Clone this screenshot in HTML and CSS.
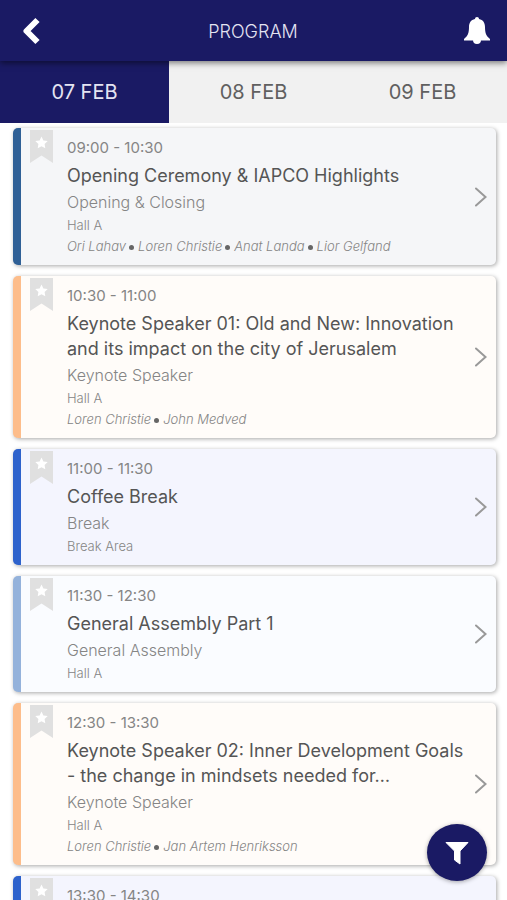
FILE: index.html
```
<!DOCTYPE html>
<html lang="en">
<head>
<meta charset="utf-8">
<meta name="viewport" content="width=device-width, initial-scale=1">
<title>Program</title>
<link rel="stylesheet" href="styles.css">
</head>
<body>
<svg class="defs" aria-hidden="true">
  <symbol id="bookmark" viewBox="0 0 23 33">
    <path fill="#e0e0e0" d="M0 0h23v33l-11.500-7.500L0 33z"/>
    <path fill="#fff" d="M11.500 6.500l1.900 3.900 4.300.6-3.100 3 .7 4.300-3.800-2-3.800 2 .7-4.300-3.100-3 4.300-.6z"/>
  </symbol>
  <symbol id="chevron" viewBox="0 0 12 20">
    <path fill="none" stroke="#999" stroke-width="2" stroke-linecap="round" d="M1 1.500l9.500 8.500L1 18.500"/>
  </symbol>
</svg>
<header class="topbar">
  <button class="icon-button" aria-label="Back"><svg class="back" viewBox="0 0 20 28"><path fill="none" stroke="#fff" stroke-width="6" stroke-linejoin="round" d="M16 3L5 14l11 11"/></svg></button>
  <h1>PROGRAM</h1>
  <button class="icon-button" aria-label="Notifications"><svg class="bell" viewBox="0 0 26 28"><path fill="#fff" d="M13 0c1.200 0 2 .8 2 2 4.200.9 6 4 6 8 0 6 1.200 9 5 12v1.500H0V22c3.800-3 5-6 5-12 0-4 1.800-7.100 6-8 0-1.200.8-2 2-2zM9 23h8a4 4 0 0 1-8 0z"/></svg></button>
</header>
<nav class="tabs">
  <button class="tab active">07 FEB</button>
  <button class="tab">08 FEB</button>
  <button class="tab">09 FEB</button>
</nav>
<main class="sessions">
  <article class="card navy">
    <button class="save" aria-label="Save session"><svg><use href="#bookmark"/></svg></button>
    <div class="body">
      <p class="time">09:00 - 10:30</p>
      <h2>Opening Ceremony &amp; IAPCO Highlights</h2>
      <p class="type">Opening &amp; Closing</p>
      <p class="hall">Hall A</p>
      <ul class="speakers"><li>Ori Lahav</li><li>Loren Christie</li><li>Anat Landa</li><li>Lior Gelfand</li></ul>
    </div>
    <svg class="chevron"><use href="#chevron"/></svg>
  </article>
  <article class="card orange">
    <button class="save" aria-label="Save session"><svg><use href="#bookmark"/></svg></button>
    <div class="body">
      <p class="time">10:30 - 11:00</p>
      <h2>Keynote Speaker 01: Old and New: Innovation and its impact on the city of Jerusalem</h2>
      <p class="type">Keynote Speaker</p>
      <p class="hall">Hall A</p>
      <ul class="speakers"><li>Loren Christie</li><li>John Medved</li></ul>
    </div>
    <svg class="chevron"><use href="#chevron"/></svg>
  </article>
  <article class="card blue">
    <button class="save" aria-label="Save session"><svg><use href="#bookmark"/></svg></button>
    <div class="body">
      <p class="time">11:00 - 11:30</p>
      <h2>Coffee Break</h2>
      <p class="type">Break</p>
      <p class="hall">Break Area</p>
    </div>
    <svg class="chevron"><use href="#chevron"/></svg>
  </article>
  <article class="card sky">
    <button class="save" aria-label="Save session"><svg><use href="#bookmark"/></svg></button>
    <div class="body">
      <p class="time">11:30 - 12:30</p>
      <h2>General Assembly Part 1</h2>
      <p class="type">General Assembly</p>
      <p class="hall">Hall A</p>
    </div>
    <svg class="chevron"><use href="#chevron"/></svg>
  </article>
  <article class="card orange">
    <button class="save" aria-label="Save session"><svg><use href="#bookmark"/></svg></button>
    <div class="body">
      <p class="time">12:30 - 13:30</p>
      <h2>Keynote Speaker 02: Inner Development Goals - the change in mindsets needed for…</h2>
      <p class="type">Keynote Speaker</p>
      <p class="hall">Hall A</p>
      <ul class="speakers"><li>Loren Christie</li><li>Jan Artem Henriksson</li></ul>
    </div>
    <svg class="chevron"><use href="#chevron"/></svg>
  </article>
  <article class="card blue">
    <button class="save" aria-label="Save session"><svg><use href="#bookmark"/></svg></button>
    <div class="body">
      <p class="time">13:30 - 14:30</p>
    </div>
  </article>
</main>
<button class="filter" aria-label="Filter sessions"><svg viewBox="0 0 24 24"><path fill="#fff" stroke="#fff" stroke-width="1" stroke-linejoin="round" d="M1 1.500h22l-8 8.500V23l-5.500-4V10z"/></svg></button>
</body>
</html>
```
FILE: styles.css
```
* { box-sizing: border-box; }
html, body { height: 100%; }
body {
  margin: 0;
  display: flex;
  flex-direction: column;
  overflow: hidden;
  background: #fff;
  color: #606060;
  font-family: Inter, "Open Sans", sans-serif;
}
button { border: 0; padding: 0; background: none; font: inherit; color: inherit; cursor: pointer; }
h1, h2, p, ul { margin: 0; padding: 0; font-weight: 400; }
.defs { display: none; }

.topbar {
  display: flex;
  align-items: center;
  justify-content: space-between;
  flex: none;
  height: 61px;
  padding: 0 16px 0 20px;
  background: #1a1a64;
  color: #e4e4f2;
  box-shadow: 0 2px 6px rgba(0, 0, 0, .5);
  z-index: 1;
}
.topbar h1 { font-size: 18px; font-weight: 300; padding-top: 2px; }
.icon-button { display: flex; }
.back { width: 23px; height: 28px; }
.bell { width: 28px; height: 28px; }

.tabs { display: grid; grid-template-columns: repeat(3, 1fr); flex: none; height: 62px; background: #f1f1f1; }
.tab { font-size: 20px; }
.tab.active { background: #1a1a64; color: #e4e4f2; }

.sessions {
  display: flex;
  flex-direction: column;
  gap: 11px;
  flex: 1;
  min-height: 0;
  padding: 5px 11px 0 13px;
  overflow: hidden;
}
.card {
  display: flex;
  flex: none;
  border-left: 8px solid;
  border-radius: 5px;
  padding-right: 9px;
  box-shadow: 1px 1px 4px rgba(0, 0, 0, .35);
}
.navy { background: #f5f6f8; border-color: #2f6096; }
.orange { background: #fffcf9; border-color: #fdbd8b; }
.blue { background: #f4f5fe; border-color: #2d62cc; }
.sky { background: #fafcff; border-color: #94b2db; }

.save { align-self: flex-start; margin: 2px 14px 0 9px; }
.save svg { display: block; width: 23px; height: 33px; }
.body { flex: 1; min-width: 0; padding: 9px 0 10px; color: #858585; }
.time { font-size: 15px; line-height: 22px; }
h2 { margin-top: 4px; font-size: 18px; line-height: 25px; color: #555; }
.type { font-size: 16px; line-height: 28px; font-weight: 300; }
.hall { font-size: 13px; line-height: 18px; font-weight: 300; }
.speakers { display: flex; padding-top: 4px; list-style: none; font-size: 13px; line-height: 17px; font-style: italic; font-weight: 300; }
.speakers li + li::before {
  content: "";
  display: inline-block;
  width: 5px;
  height: 5px;
  margin: 0 4px 1px 3px;
  border-radius: 50%;
  background: #666;
}
.chevron { flex: none; align-self: center; width: 12px; height: 20px; }

.filter {
  position: fixed;
  right: 20px;
  bottom: 19px;
  z-index: 2;
  display: flex;
  align-items: center;
  justify-content: center;
  width: 60px;
  height: 57px;
  border-radius: 50%;
  background: #1a1a64;
  box-shadow: 0 1px 4px rgba(0, 0, 0, .35);
}
.filter svg { width: 24px; height: 24px; }
```
